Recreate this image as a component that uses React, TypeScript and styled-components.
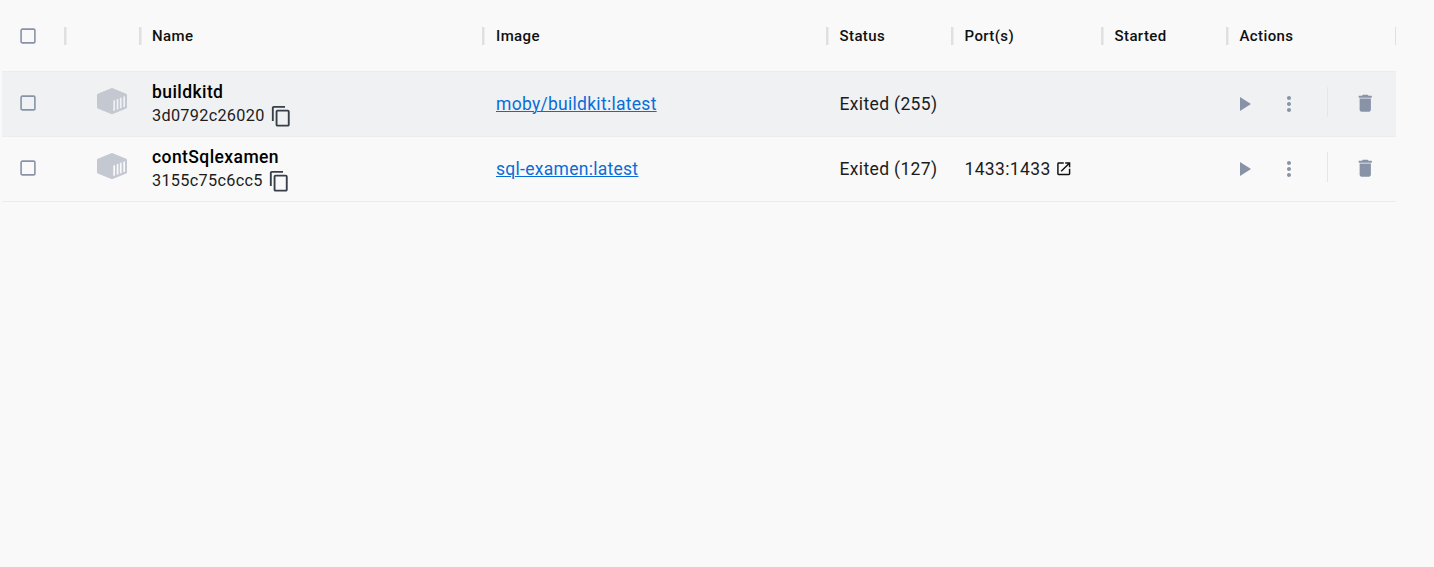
import React from "react";
import styled, { createGlobalStyle } from "styled-components";

const GlobalStyle = createGlobalStyle`
  * { box-sizing: border-box; }
  body {
    margin: 0;
    background: #f9f9f9;
    color: #1c1c1c;
    font-family: Roboto, "Liberation Sans", sans-serif;
  }
`;

const Page = styled.main`
  min-height: 567px;
  padding-left: 2px;
`;

const Table = styled.div`
  width: 1394px;
`;

const Row = styled.div<{ $hovered?: boolean }>`
  display: grid;
  grid-template-columns: 62.5px 75px 344px 343.5px 125px 150px 125px 169px;
  align-items: center;
  height: 65px;
  border-bottom: 1px solid #ececed;
  background: ${(p) => (p.$hovered ? "#f0f1f3" : "transparent")};
`;

const HeaderRow = styled(Row)`
  height: 72px;
`;

const HeaderCell = styled.div<{ $overhang: number }>`
  display: flex;
  align-items: center;
  justify-content: space-between;
  height: 18px;
  margin-right: ${(p) => -p.$overhang}px;
  padding-left: 12.5px;
  font-size: 15px;
  font-weight: 500;
  letter-spacing: 0.4px;
  line-height: 18px;
  color: #101010;
  overflow: hidden;
`;

const Cell = styled.div`
  display: flex;
  align-items: center;
  padding-left: 12.5px;
  font-size: 17.5px;
  letter-spacing: 0.35px;
  line-height: 24px;
  white-space: nowrap;
`;

const CheckCell = styled.div`
  display: flex;
  padding: 0 0 2px 18px;
`;

const CheckButton = styled.button`
  display: flex;
  padding: 0;
  border: 0;
  background: transparent;
  color: #8993a8;
`;

const HeaderCheckButton = styled(CheckButton)`
  margin-left: 5.5px;
`;

const IconCell = styled.div`
  display: flex;
  justify-content: center;
  padding: 0 0 6px 20px;
`;

const NameCell = styled.div`
  display: flex;
  flex-direction: column;
  padding-left: 12.5px;
`;

const Name = styled.span`
  font-size: 17.5px;
  font-weight: 500;
  letter-spacing: 0.42px;
  line-height: 24px;
  color: #000;
`;

const IdLine = styled.span`
  display: flex;
  align-items: center;
  gap: 5px;
  height: 24px;
  margin: -1px 0 1px;
  font-size: 16.25px;
  letter-spacing: 0.3px;

  svg {
    margin-top: 2px;
  }
`;

const ImageLink = styled.a`
  color: #086dd7;
  font-size: 17.5px;
  letter-spacing: 0.28px;
  text-decoration: underline;
  text-decoration-thickness: 1px;
  text-underline-offset: 1px;
`;

const Actions = styled.div`
  display: flex;
  align-items: center;
  padding: 0 0 1px 5.3px;
  color: #8993a8;
`;

const ActionButton = styled.button<{ $indent?: number }>`
  display: flex;
  flex: none;
  margin-left: ${(p) => p.$indent ?? 0}px;
  padding: 0;
  border: 0;
  background: none;
  color: inherit;
`;

const Divider = styled.span`
  width: 1px;
  height: 30px;
  margin: 0 0 4px 26px;
  background: #e5e6e9;
`;

const PortLink = styled.span`
  display: flex;
  align-items: center;
  gap: 4px;
`;

const Icon = ({ d, size, color = "currentColor" }: { d: string; size: number; color?: string }) => (
  <svg width={size} height={size} viewBox="0 0 24 24" fill={color} aria-hidden="true">
    <path d={d} />
  </svg>
);

const COPY = "M16 1H4c-1.1 0-2 .9-2 2v14h2V3h12V1zm3 4H8c-1.1 0-2 .9-2 2v14c0 1.1.9 2 2 2h11c1.1 0 2-.9 2-2V7c0-1.1-.9-2-2-2zm0 16H8V7h11v14z";
const OPEN = "M19 19H5V5h7V3H5c-1.11 0-2 .9-2 2v14c0 1.1.89 2 2 2h14c1.1 0 2-.9 2-2v-7h-2v7zM14 3v2h3.59l-9.83 9.83 1.41 1.41L19 6.41V10h2V3h-7z";
const PLAY = "M8 5v14l11-7z";
const MORE = "M12 8c1.1 0 2-.9 2-2s-.9-2-2-2-2 .9-2 2 .9 2 2 2zm0 2c-1.1 0-2 .9-2 2s.9 2 2 2 2-.9 2-2-.9-2-2-2zm0 6c-1.1 0-2 .9-2 2s.9 2 2 2 2-.9 2-2-.9-2-2-2z";
const TRASH = "M6 19c0 1.1.9 2 2 2h8c1.1 0 2-.9 2-2V7H6v12zM19 4h-3.5l-1-1h-5l-1 1H5v2h14V4z";

const BoxIcon = () => (
  <svg width="16" height="16" viewBox="0 0 16 16" fill="none" aria-hidden="true">
    <rect x="1.1" y="1.1" width="13.8" height="13.8" rx="1.2" stroke="currentColor" strokeWidth="1.6" />
  </svg>
);

const Separator = () => (
  <svg width="3" height="18" viewBox="0 0 3 18" aria-hidden="true">
    <rect width="2.5" height="18" fill="#e0e0e0" />
  </svg>
);

const EndSeparator = styled.span`
  width: 1px;
  height: 18px;
  background: #e0e0e0;
`;

const ContainerIcon = () => (
  <svg width="30" height="26" viewBox="0 0 30 26" aria-hidden="true">
    <path
      fill="#c4c8d1"
      fillRule="evenodd"
      d="M14.2.2q.8-.4 1.6 0L29.2 5.8q.8.4.8 1.2v12.2q0 .8-.8 1.2L15.8 25.9q-.8.4-1.6 0L.8 20.4q-.8-.4-.8-1.2V7Q0 6.2.8 5.8zM16.3 12.6v10.5l1.7-.5V12.100zM19.700 11.200v10.500l1.700-.5V10.700zM22.900 9.900v10.500l1.700-.5V9.400zM26.300 8.700v10.500l1.700-.5V8.200z"
    />
  </svg>
);

const HEADERS = [
  { label: "", overhang: 2 },
  { label: "Name", overhang: 1.5 },
  { label: "Image", overhang: 1.5 },
  { label: "Status", overhang: 1.5 },
  { label: "Port(s)", overhang: 1.5 },
  { label: "Started", overhang: 1.5 },
  { label: "Actions", overhang: 0 },
];

const CONTAINERS = [
  { name: "buildkitd", id: "3d0792c26020", image: "moby/buildkit:latest", status: "Exited (255)", port: "", hovered: true },
  { name: "contSqlexamen", id: "3155c75c6cc5", image: "sql-examen:latest", status: "Exited (127)", port: "1433:1433", hovered: false },
];

export default function App() {
  return (
    <Page>
      <GlobalStyle />
      <Table>
        <HeaderRow>
          <HeaderCell $overhang={2}>
            <HeaderCheckButton aria-label="Select all">
              <BoxIcon />
            </HeaderCheckButton>
            <Separator />
          </HeaderCell>
          {HEADERS.map(({ label, overhang }, i) => (
            <HeaderCell key={i} $overhang={overhang}>
              <span>{label}</span>
              {overhang === 0 ? <EndSeparator /> : <Separator />}
            </HeaderCell>
          ))}
        </HeaderRow>
        {CONTAINERS.map((c) => (
          <Row key={c.id} $hovered={c.hovered}>
            <CheckCell>
              <CheckButton aria-label={`Select ${c.name}`}>
                <BoxIcon />
              </CheckButton>
            </CheckCell>
            <IconCell>
              <ContainerIcon />
            </IconCell>
            <NameCell>
              <Name>{c.name}</Name>
              <IdLine>
                {c.id}
                <Icon d={COPY} size={22.5} color="#393f49" />
              </IdLine>
            </NameCell>
            <Cell>
              <ImageLink>{c.image}</ImageLink>
            </Cell>
            <Cell>{c.status}</Cell>
            <Cell>
              {c.port && (
                <PortLink>
                  {c.port}
                  <Icon d={OPEN} size={17.5} color="#111" />
                </PortLink>
              )}
            </Cell>
            <Cell />
            <Actions>
              <ActionButton aria-label="Start">
                <Icon d={PLAY} size={24} />
              </ActionButton>
              <ActionButton $indent={20.5} aria-label="More">
                <Icon d={MORE} size={24} />
              </ActionButton>
              <Divider />
              <ActionButton $indent={26.5} aria-label="Delete">
                <Icon d={TRASH} size={22.5} />
              </ActionButton>
            </Actions>
          </Row>
        ))}
      </Table>
    </Page>
  );
}
